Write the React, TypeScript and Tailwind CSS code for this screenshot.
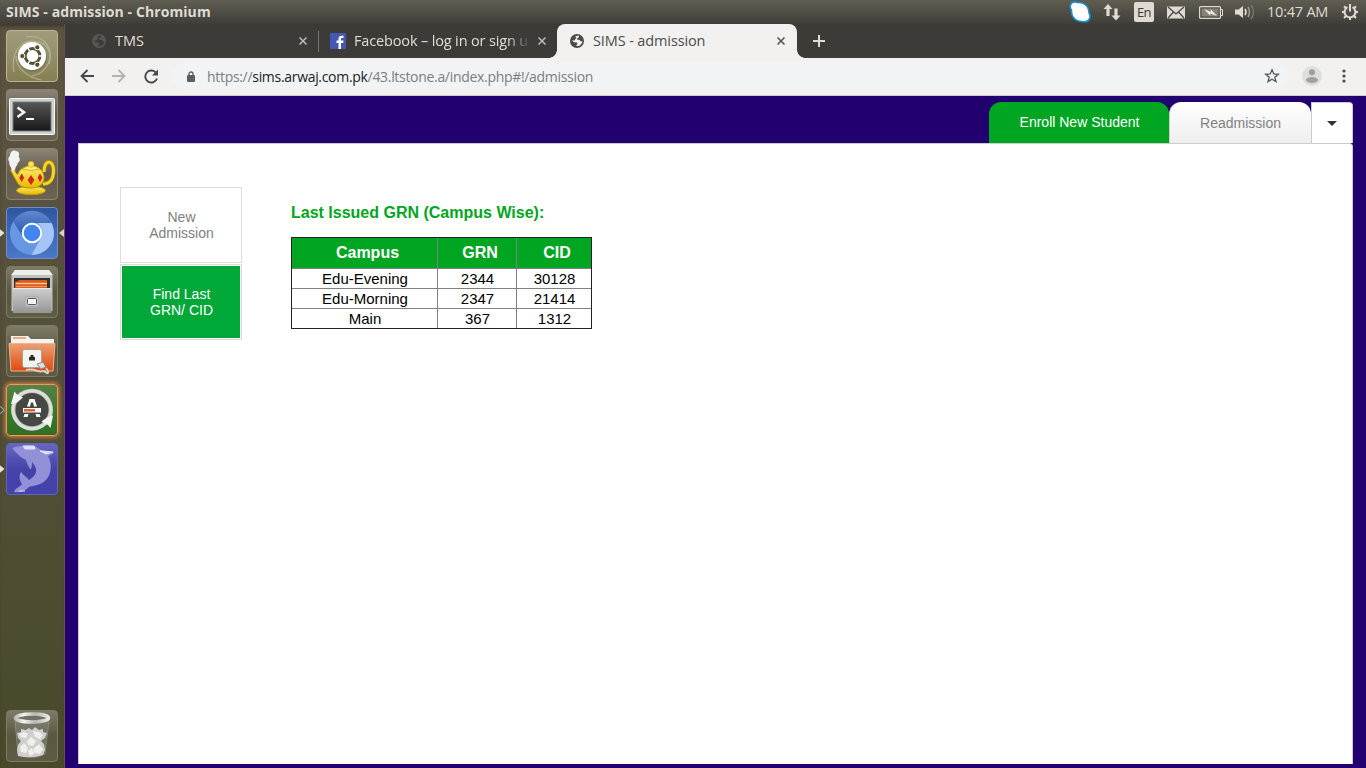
import React from "react";

const ui = "font-['Open_Sans','Noto_Sans',sans-serif]";

function Globe({ color, hole }: { color: string; hole: string }) {
  return (
    <svg width="14" height="14" viewBox="0 0 14 14" className="shrink-0">
      <circle cx="7" cy="7" r="7" fill={color} />
      <path d="M5.600 2.200 8.600 1.600 9 3.200 7.400 4.200 7 5.600 9.600 6 11 7.400 12.400 7C12.300 9.700 10.200 12 7.200 12.300L6.200 11.200 7.600 9.800 6.800 8.600 4 8.300 1.700 6.400L4.400 6.600 5.400 5 6.600 4 5.600 3.400Z" fill={hole} />
    </svg>
  );
}

function Close({ color }: { color: string }) {
  return (
    <svg width="8" height="8" viewBox="0 0 8 8" className="shrink-0">
      <path d="M.5.5 7.5 7.5M7.5.5.5 7.5" stroke={color} strokeWidth="1.5" fill="none" />
    </svg>
  );
}

function TopBar() {
  return (
    <header className={`flex h-6 shrink-0 items-center bg-linear-to-b from-[#605d52] to-[#403e39] pl-1.5 text-[#dfdbd2] ${ui}`}>
      <span className="w-[300px] whitespace-nowrap text-[14px] leading-6 font-bold tracking-[0.09px]">SIMS - admission - Chromium</span>
      <div className="ml-auto flex h-6 items-center">
        <svg width="22" height="22" viewBox="0 0 22 22" className="mr-[12px]">
          <path d="M1.500 4C2 1 6 .2 8.500 1.500C15 1 20 5 20 12C22 15 21 21 15.500 20.800C7 21 2 17 2.500 9C1.500 8 1 6 1.500 4Z" fill="#fff" stroke="#1690cf" strokeWidth="1.600" />
        </svg>
        <svg width="18" height="18" viewBox="0 0 18 18" className="mr-[13px]">
          <path d="M5 1 9.500 6H6.600V13H3.400V6H.5ZM13 17.500 8.500 12.500H11.400V5.500H14.600V12.500H17.500Z" fill="#dfdbd2" />
        </svg>
        <div className="mr-[13px] flex h-5 w-5 items-center justify-center rounded-[2px] bg-[#dfdbd2] text-[13px] leading-5 tracking-[-0.5px] text-[#3c3b37]">En</div>
        <svg width="18" height="13" viewBox="0 0 18 13" className="mr-[14px]">
          <path d="M0 .5H18V12.500H0Z" fill="#dfdbd2" />
          <path d="M1 1 9 8 17 1M1 12 6.500 6M17 12 11.500 6" stroke="#47453f" strokeWidth="1.200" fill="none" />
        </svg>
        <svg width="24" height="13" viewBox="0 0 24 13" className="mr-[12px]">
          <rect x=".6" y=".6" width="20.800" height="11.800" rx="1" fill="none" stroke="#dfdbd2" strokeWidth="1.200" />
          <rect x="2.500" y="2.500" width="17" height="8" fill="#858177" />
          <path d="M22 3.500H23.500V9.500H22" stroke="#dfdbd2" fill="none" />
          <path d="M5 3 12 6 11.500 3 18 10 11 7.500 11.500 10Z" fill="#f1eee6" />
        </svg>
        <svg width="20" height="16" viewBox="0 0 20 16" className="mr-[12px]">
          <path d="M0 5.500H3.500L8 2V14L3.500 10.500H0Z" fill="#dfdbd2" />
          <path d="M10 5Q12 8 10 11" stroke="#dfdbd2" strokeWidth="1.600" fill="none" />
          <path d="M13 3Q16 8 13 13" stroke="#a09d94" strokeWidth="1.500" fill="none" />
          <path d="M16 1Q21 8 16 15" stroke="#77746c" strokeWidth="1.500" fill="none" />
        </svg>
        <span className="mr-3 w-[62px] text-[14.5px] leading-6 tracking-[-0.22px] whitespace-nowrap">10:47 AM</span>
        <svg width="18" height="18" viewBox="0 0 18 18" className="mr-[7px]">
          <path d="M6.500 4.200A5.400 5.400 0 1 0 11.500 4.200" fill="none" stroke="#dfdbd2" strokeWidth="2" />
          <path d="M9 1V8.500M1 9H4M14 9H17M3 3.200 5 5.200M15 3.200 13 5.200M3 15 5 13M15 15 13 13M9 14V17" stroke="#dfdbd2" strokeWidth="2" />
        </svg>
      </div>
    </header>
  );
}

const tileStyles: Record<string, string> = {
  plain: "border-[#8a8472] from-[#8b8476] via-[#625a4c] to-[#6d6552]",
  ubuntu: "border-[#b9b696] from-[#a09b7c] via-[#948f6b] to-[#858052]",
  blue: "border-[#6b8fce] from-[#2f56a0] via-[#3f69b6] to-[#4a78c6]",
  olive: "border-[#7d7b62] from-[#7f7b69] via-[#59563f] to-[#5f5d45]",
  green: "border-[#f09a5a] from-[#558148] via-[#387a2c] to-[#2f6f25] shadow-[0_0_4px_1px_#e9823f]",
  dolphin: "border-[#6463bd] from-[#6766c2] via-[#4543a9] to-[#4442ab]",
};

function Tile({ kind, children, arrow }: { kind: string; children: React.ReactNode; arrow?: "left" | "both" | "open" }) {
  return (
    <div className="flex h-[52px] w-[65px] shrink-0 items-center">
      <svg width="6" height="12" viewBox="0 0 6 12" className="shrink-0">
        {arrow && <path d="M-1 1.500 4.500 6-1 10.500Z" fill={arrow === "open" ? "none" : "#e4e2da"} stroke={arrow === "open" ? "#79c8e8" : "none"} />}
      </svg>
      <div className={`flex h-[52px] w-[52px] shrink-0 items-center justify-center rounded-[4px] border bg-linear-to-b ${tileStyles[kind]}`}>
        <svg width="50" height="50" viewBox="1 1 50 50">{children}</svg>
      </div>
      <svg width="7" height="12" viewBox="0 0 7 12" className="shrink-0">
        {arrow === "both" && <path d="M6 2 1 6 6 10Z" fill="#d8d5cc" />}
      </svg>
    </div>
  );
}

function Launcher() {
  return (
    <nav className="flex w-[65px] shrink-0 flex-col gap-[7px] bg-linear-to-b from-[#5e5241] via-[#57513c] via-30% to-[#484a2b] pt-1.5 pb-1.5 shadow-[inset_-1px_0_0_#66524a,inset_0_4px_4px_-2px_#3a3428]">
      <Tile kind="ubuntu">
        <g fill="none" stroke="#c7c4a5" strokeWidth="1.200" opacity=".6">
          <path d="M8 42C4 20 18 5 38 14C50 25 42 43 26 46" /><path d="M20 7C37 4 48 17 43 34" /><path d="M10 26C10 38 22 48 36 50" />
        </g>
        <circle cx="26.500" cy="27.500" r="14.500" fill="#6e6b4d" opacity=".5" />
        <circle cx="26" cy="26" r="14" fill="#fff" />
        <circle cx="26.500" cy="26" r="7.400" fill="none" stroke="#555136" strokeWidth="3" />
        <path d="M32.500 26H37M23.500 20.800 21.500 17.300M23.500 31.200 21.500 34.700" stroke="#fff" strokeWidth="1.400" />
        <g fill="#555136" stroke="#fff" strokeWidth="1"><circle cx="16.300" cy="26" r="2.600" /><circle cx="31.300" cy="17.300" r="2.600" /><circle cx="31.300" cy="34.700" r="2.600" /></g>
      </Tile>
      <Tile kind="plain">
        <defs><linearGradient id="term" x2="0" y2="1"><stop stopColor="#575757" /><stop offset="1" stopColor="#181818" /></linearGradient></defs>
        <rect x="3.500" y="9.500" width="45" height="36" rx="1" fill="#d0d2d2" stroke="#f6f6f6" />
        <rect x="7" y="13" width="38" height="29" fill="url(#term)" stroke="#777" />
        <path d="M11.500 18.500 18 23.200 11.500 28" stroke="#f4f4f4" strokeWidth="2.600" fill="none" /><path d="M20 30H28" stroke="#fff" strokeWidth="2" />
      </Tile>
      <Tile kind="plain">
        <defs><linearGradient id="pot" x2="0" y2="1"><stop stopColor="#ffea6a" /><stop offset="1" stopColor="#e6b800" /></linearGradient></defs>
        <ellipse cx="25" cy="42.500" rx="14.500" ry="4.200" fill="url(#pot)" stroke="#c79a00" />
        <path d="M38 24C38 10 48 12 47.500 23C47.500 32 43 36 37 36" fill="none" stroke="#b58b00" strokeWidth="4.200" />
        <path d="M38 24C38 10 48 12 47.500 23C47.500 32 43 36 37 36" fill="none" stroke="#f6d52c" strokeWidth="2.800" />
        <path d="M4.500 22 8 21C10 24 10 27 12 26C13 22 16 20 19 19H31C36 21 38.500 26 38 31C37 37 32 40 25 40C17 40 13 38 11 34C9 31 7 27 4.500 22Z" fill="url(#pot)" stroke="#bb8f00" />
        <path d="M16 21Q25 14 34 21Q25 24 16 21Z" fill="#ffee7c" stroke="#c99d00" strokeWidth=".8" /><circle cx="25" cy="16.300" r="3" fill="#ffe557" stroke="#c99d00" strokeWidth=".6" />
        <path d="M15.700 26 17.700 29.700 15.700 33.500 13.700 29.700ZM25 27.500 28 32 25 36.500 22 32ZM34 26 36 29.700 34 33.500 32 29.700Z" fill="#df1d20" stroke="#a52215" strokeWidth=".6" />
        <path d="M6 23C5 18 2.500 17 3.500 14C1.500 12 2.500 9 4 8C4 4 7 1.500 9.500 3C13 3 14 6 12.500 9C15 11 13.500 14 11.500 15C12 17 9.500 18 9 22Z" fill="#f2f2f1" />
      </Tile>
      <Tile kind="blue" arrow="both">
        <defs><linearGradient id="cap" x2="0" y2="1"><stop stopColor="#6288cb" /><stop offset="1" stopColor="#2457b2" /></linearGradient></defs>
        <circle cx="26" cy="26" r="22" fill="#6797e2" />
        <path d="M7.300 14.800C16-.5 38 .5 45.500 16H26A10 10 0 0 0 17 30Z" fill="url(#cap)" />
        <path d="M45.500 16C53 32 42 48 25.500 48L35 31C38 25 36 19 31 16Z" fill="#a5c4f7" />
        <circle cx="26" cy="26" r="10.300" fill="#fff" /><circle cx="26" cy="26" r="8.300" fill="#4285ee" />
      </Tile>
      <Tile kind="olive">
        <defs><linearGradient id="drawer" x2="0" y2="1"><stop stopColor="#cfcfcf" /><stop offset="1" stopColor="#959595" /></linearGradient></defs>
        <path d="M9 4H43L46.500 8V45H5.500V8Z" fill="#c0c0be" /><path d="M9 4H43L46.500 9H5.500Z" fill="#ededeb" />
        <rect x="8" y="12" width="36" height="12" fill="#32312f" /><path d="M9 16 14 14H41V22H9Z" fill="#d95821" /><path d="M10 17.500H41" stroke="#ffcc8c" strokeWidth="1.400" /><path d="M10 20.500H41" stroke="#f0994f" strokeWidth="1.200" />
        <path d="M7 22H45.500V47H7Z" fill="url(#drawer)" /><path d="M7 22.500H45" stroke="#e6e6e6" /><rect x="19.500" y="30.500" width="13" height="10" rx="2" fill="#c8c8c8" stroke="#b0b0b0" strokeWidth="1.500" /><rect x="21.500" y="32.500" width="9" height="6" rx="1" fill="#f4f4f4" stroke="#555" />
      </Tile>
      <Tile kind="olive">
        <defs><linearGradient id="folder" x2="0" y2="1"><stop stopColor="#ee9f70" /><stop offset="1" stopColor="#dd4a10" /></linearGradient></defs>
        <path d="M5 11H22L25 14H48V24H5Z" fill="#f3f3ef" /><path d="M7 13H20" stroke="#f0a978" strokeWidth="2" />
        <path d="M3 18.500H49L47 46H5Z" fill="url(#folder)" stroke="#f3b28d" />
        <rect x="16.500" y="24.500" width="19" height="18" rx="2" fill="#f5f3ed" stroke="#a5a39d" /><path d="M23 35.500V32H24.500V30H27.500V32H29V35.500Z" fill="#292b27" />
        <path d="M20 45C30 42 31 49 38 46C42 50 44 48 40 43" stroke="#d6d6d3" strokeWidth="1.800" fill="none" /><path d="M31 39 37 37 40 42 35 44Z" fill="#ddd" stroke="#888" />
      </Tile>
      <Tile kind="green" arrow="open">
        <circle cx="26" cy="25.700" r="21" fill="#b9beb6" /><circle cx="26" cy="25.700" r="19" fill="none" stroke="#dedfdc" strokeWidth="3" /><circle cx="26" cy="25.700" r="16.600" fill="#464844" />
        <path d="M5 20 8.500 7.500 11 10.500 17 13.500 10.500 19ZM47 31.500 44.500 44 42 41 35.500 37.500 41.500 33Z" fill="#f4f5f3" />
        <path d="M23.500 15H28.500L31 22.500H28L27 18.500H25L24 22.500H21ZM17 24H35V28.500H17ZM18.500 30H22.500L21.500 33H17.500ZM29.500 30H33.500L34.500 33H30.500Z" fill="#fff" /><path d="M18 26.300H29" stroke="#e55b22" strokeWidth="2.400" />
      </Tile>
      <Tile kind="dolphin" arrow="left">
        <defs><filter id="soft"><feGaussianBlur stdDeviation=".6" /></filter></defs>
        <g filter="url(#soft)">
          <path d="M6 5C12 3 18 2 29 3L35 7 48 9C47 12 43 12 42 13C46 20 46 31 40 37C34 43 28 42 23 44C19 47 18 50 8 49C9 45 14 44 16 41C13 37 13 32 15 29C18 33 21 34 23 37C28 34 31 30 30 26C29 22 27 20 26 19C26 24 25 27 24 26C22 23 21 20 20 17C15 15 9 9 6 5Z" fill="#9291d8" />
          <path d="M17 3 28 3 29 6 19 6ZM34 8 47 9 40 11ZM13 48H19" fill="#dfe0f4" stroke="#dfe0f4" />
        </g>
      </Tile>
      <div className="mt-auto">
        <Tile kind="olive">
          <defs><linearGradient id="rim" x2="1"><stop stopColor="#bcbcb6" /><stop offset=".25" stopColor="#f3f3f1" /><stop offset=".6" stopColor="#b7b7b1" /><stop offset="1" stopColor="#e8e8e5" /></linearGradient></defs>
          <path d="M9 11 12 44Q26 51 39 44L43 11Z" fill="#85857a" opacity=".55" stroke="#a9aa9c" />
          <path d="M12 46 11 40 12 35 15 31 12 28 11 23 15 22 15 19 20 20 23 18 26 20 29 17 33 20 37 19 37 22 41 23 39 28 35 31 38 34 39 40 37 45Q25 49 12 46Z" fill="#cfcfcc" />
          <path d="M13 24 18 22 22 24 20 28 15 27ZM27 21 33 22 37 25 34 29 29 27ZM21 31 25 27 30 31 27 36 22 35ZM14 37 18 33 22 38 20 43 15 42ZM27 39 33 34 37 39 34 44 28 43ZM22 41 26 38 28 44 24 46Z" fill="#efefed" />
          <ellipse cx="26" cy="8" rx="16.500" ry="4" fill="#6f705f" stroke="url(#rim)" strokeWidth="3.600" />
        </Tile>
      </div>
    </nav>
  );
}

function TabStrip() {
  return (
    <div className={`flex h-[34px] shrink-0 bg-[#3c3b37] text-[14.5px] text-[#e0ddd4] ${ui}`}>
      <div className="flex w-[254px] items-center pr-[12px] pl-[27px]">
        <Globe color="#575752" hole="#3c3b37" />
        <span className="ml-[9px] tracking-[-0.05px]">TMS</span>
        <span className="ml-auto"><Close color="#bdbbb4" /></span>
      </div>
      <div className="flex w-[238px] items-center pr-[11px]">
        <i className="-ml-px h-[21px] w-px bg-[#77756f]" />
        <svg width="16" height="16" viewBox="0 0 16 16" className="ml-[11px] shrink-0">
          <rect width="16" height="16" fill="#4457b4" />
          <path d="M8.500 16V10H6.500V7.500H8.500V6C8.500 3.800 9.700 2.700 11.500 2.700H13.500V5H12C11.200 5 11 5.500 11 6.200V7.500H13.500L13.200 10H11V16Z" fill="#fff" />
        </svg>
        <span className="ml-2 w-[175px] overflow-hidden whitespace-nowrap tracking-[-0.15px] [mask-image:linear-gradient(to_right,black_153px,transparent_177px)]">Facebook – log in or sign up</span>
        <span className="ml-auto"><Close color="#bdbbb4" /></span>
      </div>
      <div className="relative flex w-[240px] items-center rounded-t-lg bg-[#f2f1f0] pr-[12px] pl-[13px] text-[#4b4c4f]">
        <i className="absolute bottom-0 -left-2 h-2 w-2 bg-[radial-gradient(circle_at_0_0,transparent_7.5px,#f2f1f0_8px)]" />
        <i className="absolute -right-2 bottom-0 h-2 w-2 bg-[radial-gradient(circle_at_100%_0,transparent_7.5px,#f2f1f0_8px)]" />
        <Globe color="#4a4a4a" hole="#f2f1f0" />
        <span className="ml-[9px] tracking-[-0.12px] whitespace-nowrap">SIMS - admission</span>
        <span className="ml-auto"><Close color="#505154" /></span>
      </div>
      <svg width="12" height="12" viewBox="0 0 12 12" className="mt-[11px] ml-4">
        <path d="M6 0V12M0 6H12" stroke="#e0ddd0" strokeWidth="2" />
      </svg>
    </div>
  );
}

function Toolbar() {
  return (
    <div className={`flex h-[38px] shrink-0 items-center border-b border-[#cfcdca] bg-[#f2f1f0] pb-px ${ui}`}>
      <svg width="14" height="14" viewBox="0 0 14 14" className="ml-[15px] shrink-0"><path d="M14 7H1.500M7.500 1 1.500 7 7.500 13" fill="none" stroke="#45484b" strokeWidth="1.800" /></svg>
      <svg width="14" height="14" viewBox="0 0 14 14" className="ml-[18px] shrink-0"><path d="M0 7H12.500M6.500 1 12.500 7 6.500 13" fill="none" stroke="#b2b2b2" strokeWidth="1.800" /></svg>
      <svg width="15" height="15" viewBox="0 0 15 15" className="ml-[18px] shrink-0"><path d="M13 9.500A6 6 0 1 1 11.500 3.200" fill="none" stroke="#45484b" strokeWidth="1.900" /><path d="M14 .5V6.500H8Z" fill="#45484b" /></svg>
      <div className="ml-[13px] flex h-7 w-[1118px] items-center rounded-full bg-[#f1f3f4] pl-[15px]">
        <svg width="8" height="11" viewBox="0 0 8 11" className="shrink-0"><path d="M2 5V3A2 2 0 0 1 6 3V5" fill="none" stroke="#5b5f63" strokeWidth="1.300" /><rect y="4" width="8" height="7" rx="1" fill="#5b5f63" /></svg>
        <span className="ml-3 text-[14px] tracking-[-0.31px] whitespace-nowrap text-[#7b7f83]">https://<span className="text-[#202124]">sims.arwaj.com.pk</span>/43.ltstone.a/index.php#!/admission</span>
        <svg width="16" height="16" viewBox="0 0 16 16" className="mr-[10px] ml-auto shrink-0"><path d="M8 1.800 9.800 6 14.300 6.300 10.800 9.200 12 13.600 8 11.200 4 13.600 5.200 9.200 1.700 6.300 6.200 6Z" fill="none" stroke="#53575b" strokeWidth="1.300" /></svg>
      </div>
      <svg width="20" height="20" viewBox="0 0 20 20" className="ml-3 shrink-0"><circle cx="10" cy="10" r="10" fill="#dedede" /><circle cx="10" cy="6.300" r="3.100" fill="#a0a0a0" /><ellipse cx="10" cy="14" rx="6" ry="3" fill="#a0a0a0" /></svg>
      <svg width="4" height="14" viewBox="0 0 4 14" className="ml-[20px] shrink-0"><g fill="#484b4e"><circle cx="2" cy="2" r="1.600" /><circle cx="2" cy="7" r="1.600" /><circle cx="2" cy="12" r="1.600" /></g></svg>
    </div>
  );
}

const rows = [
  ["Edu-Evening", "2344", "30128"],
  ["Edu-Morning", "2347", "21414"],
  ["Main", "367", "1312"],
];

function Page() {
  return (
    <main className="flex min-h-0 flex-1 flex-col bg-[#220070] px-[13px] pt-1.5 pb-1 font-['Liberation_Sans',Arial,sans-serif]">
      <div className="flex h-[41px] shrink-0 justify-end text-[14px]">
        <button className="w-[180px] rounded-t-[12px] bg-[#00a621] pl-px text-white">Enroll New Student</button>
        <button className="w-[142px] rounded-t-[12px] border-l border-[#ccc] bg-linear-to-b from-white to-[#eeeeee] pt-0.5 text-[#828282]">Readmission</button>
        <button className="flex w-[42px] items-center justify-center rounded-tr-[4px] border border-b-0 border-[#ccc] bg-white">
          <svg width="10" height="5" viewBox="0 0 10 5"><path d="M0 0H10L5 5Z" fill="#333" /></svg>
        </button>
      </div>
      <section className="flex flex-1 items-start rounded-tr-[4px] border border-b-0 border-[#ccc] bg-white pt-[43px] pl-[41px]">
        <div className="flex w-[122px] flex-col gap-px text-center text-[14px] leading-4">
          <button className="flex h-[76px] items-center justify-center border border-[#ddd] pl-px text-[#808080]">New<br />Admission</button>
          <button className="h-[76px] border border-[#ddd] p-px text-white"><span className="flex h-full items-center justify-center bg-[#00a838] pl-px">Find Last<br />GRN/ CID</span></button>
        </div>
        <div className="ml-[49px] pt-[17px]">
          <h2 className="text-[16px] leading-[18px] font-bold text-[#00a621]">Last Issued GRN (Campus Wise):</h2>
          <div className="mt-[15px] w-[301px] border border-[#222] text-center text-black">
            <div className="grid h-[31px] grid-cols-[146px_79px_74px] bg-[#00a621] text-[16px] leading-[30px] font-bold text-white">
              {["Campus", "GRN", "CID"].map((h) => <div key={h} className="border-r border-b border-[#808080] pl-1.5 last:border-r-0">{h}</div>)}
            </div>
            {rows.map((r, i) => (
              <div key={r[0]} className={`grid grid-cols-[146px_79px_74px] text-[15px] leading-[19px] ${i < 2 ? "h-5" : "h-[19px]"}`}>
                {r.map((c) => <div key={c} className={`border-r border-[#808080] pl-px last:border-r-0 ${i < 2 ? "border-b" : ""}`}>{c}</div>)}
              </div>
            ))}
          </div>
        </div>
      </section>
    </main>
  );
}

export default function App() {
  return (
    <div className="flex h-[768px] w-[1366px] flex-col overflow-hidden">
      <TopBar />
      <div className="flex min-h-0 flex-1">
        <Launcher />
        <div className="flex min-w-0 flex-1 flex-col">
          <TabStrip />
          <Toolbar />
          <Page />
        </div>
      </div>
    </div>
  );
}
